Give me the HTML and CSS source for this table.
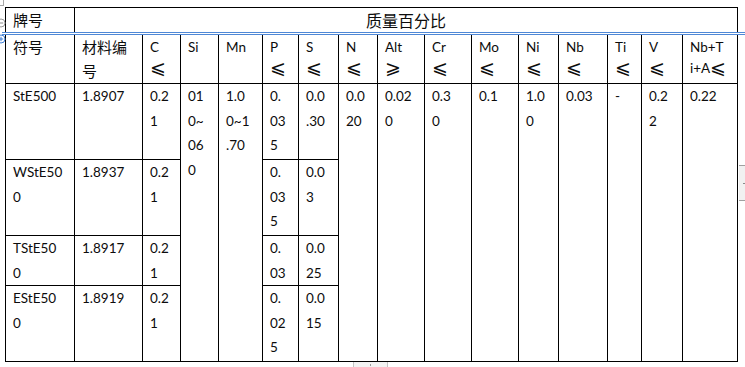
FILE: index.html
```
<!DOCTYPE html>
<html lang="zh">
<head>
<meta charset="utf-8">
<title>质量百分比</title>
<link rel="stylesheet" href="styles.css">
</head>
<body>
<div class="corner-mark"></div>
<div class="row-btn row-btn-del"><svg width="10" height="10" viewBox="0 0 10 10"><circle cx="5" cy="5" r="4" fill="#fff" stroke="#9a9a9a"/><path d="M2.8 5h4.4" stroke="#8a8a8a"/></svg></div>
<div class="row-btn row-btn-add"><svg width="10" height="10" viewBox="0 0 10 10"><circle cx="5" cy="5" r="4" fill="#fff" stroke="#3f7fd6"/><path d="M2.8 5h4.4M5 2.8v4.4" stroke="#3f7fd6"/></svg></div>
<div class="insert-line"></div>
<div class="side-handle"><span></span></div>
<div class="bottom-handle"><span></span></div>

<table class="grade">
<colgroup>
<col style="width:69px"><col style="width:68px"><col style="width:38px"><col style="width:38px">
<col style="width:44px"><col style="width:36px"><col style="width:40px"><col style="width:39px">
<col style="width:47px"><col style="width:47px"><col style="width:47px"><col style="width:40px">
<col style="width:49px"><col style="width:34px"><col style="width:41px"><col style="width:55px">
</colgroup>
<tr class="r-title">
<td class="zh">牌号</td>
<td class="zh center" colspan="15">质量百分比</td>
</tr>
<tr class="r-head">
<td class="zh">符号</td>
<td class="zh">材料编<br>号</td>
<td class="hd">C<br><span class="rel">⩽</span></td>
<td class="hd">Si</td>
<td class="hd">Mn</td>
<td class="hd">P<br><span class="rel">⩽</span></td>
<td class="hd">S<br><span class="rel">⩽</span></td>
<td class="hd">N<br><span class="rel">⩽</span></td>
<td class="hd">Alt<br><span class="rel">⩾</span></td>
<td class="hd">Cr<br><span class="rel">⩽</span></td>
<td class="hd">Mo<br><span class="rel">⩽</span></td>
<td class="hd">Ni<br><span class="rel">⩽</span></td>
<td class="hd">Nb<br><span class="rel">⩽</span></td>
<td class="hd">Ti<br><span class="rel">⩽</span></td>
<td class="hd">V<br><span class="rel">⩽</span></td>
<td class="hd">Nb+T<br>i+A<span class="rel">⩽</span></td>
</tr>
<tr class="r-3">
<td>StE500</td>
<td>1.8907</td>
<td>0.2<br>1</td>
<td rowspan="4">01<br>0~<br>06<br>0</td>
<td rowspan="4">1.0<br>0~1<br>.70</td>
<td>0.<br>03<br>5</td>
<td>0.0<br>.30</td>
<td rowspan="4">0.0<br>20</td>
<td rowspan="4">0.02<br>0</td>
<td rowspan="4">0.3<br>0</td>
<td rowspan="4">0.1</td>
<td rowspan="4">1.0<br>0</td>
<td rowspan="4">0.03</td>
<td rowspan="4">-</td>
<td rowspan="4">0.2<br>2</td>
<td rowspan="4">0.22</td>
</tr>
<tr class="r-3">
<td>WStE50<br>0</td>
<td>1.8937</td>
<td>0.2<br>1</td>
<td>0.<br>03<br>5</td>
<td>0.0<br>3</td>
</tr>
<tr class="r-2">
<td>TStE50<br>0</td>
<td>1.8917</td>
<td>0.2<br>1</td>
<td>0.<br>03</td>
<td>0.0<br>25</td>
</tr>
<tr class="r-3">
<td>EStE50<br>0</td>
<td>1.8919</td>
<td>0.2<br>1</td>
<td>0.<br>02<br>5</td>
<td>0.0<br>15</td>
</tr>
</table>
</body>
</html>
```
FILE: styles.css
```
html, body {
  background: #ffffff;
}
body {
  margin: 7px 0 0 5px;
  font-family: Lato, "Noto Sans CJK SC", "DejaVu Sans", sans-serif;
  font-size: 13.5px;
  color: #0c0c0c;
}
.grade {
  table-layout: fixed;
  border-collapse: separate;
  border-spacing: 0;
  width: 733px;
  border-top: 1px solid #000;
  border-left: 1px solid #000;
}
.grade td {
  border-right: 1px solid #000;
  border-bottom: 1px solid #000;
  padding: 0 0 0 7px;
  vertical-align: top;
  white-space: nowrap;
  line-height: 24.5px;
  overflow: hidden;
}
.grade .r-title { height: 27px; }
.grade .r-title td {
  border-bottom: 3px solid transparent;
  line-height: 24px;
  font-size: 15px;
}
.grade .r-title td.center {
  text-align: center;
  padding: 0;
  font-size: 16px;
}
.grade .r-head { height: 49px; }
.grade .r-head td.hd {
  line-height: 20px;
  padding-top: 2px;
}
.grade .r-head td.zh {
  line-height: 24px;
  font-size: 15px;
}
.grade .r-3 { height: 76px; }
.grade .r-2 { height: 50px; }
.zh {
  font-family: "Noto Sans CJK SC", sans-serif;
}
.rel {
  font-family: "DejaVu Sans", sans-serif;
  font-size: 19px;
  font-weight: 200;
  line-height: 20px;
  vertical-align: -1px;
}

/* editor overlays */
.insert-line {
  position: absolute;
  left: 2px;
  right: 0;
  top: 32px;
  height: 3px;
  box-sizing: border-box;
  border-top: 1px solid #4f88d6;
  border-bottom: 1px solid #4f88d6;
  background: #ffffff;
}
.row-btn {
  position: absolute;
  left: -4px;
  width: 10px;
  height: 10px;
}
.row-btn svg { display: block; }
.row-btn-del { top: 18px; }
.row-btn-add { top: 34px; }
.corner-mark {
  position: absolute;
  left: 0;
  top: 0;
  width: 3px;
  height: 5px;
  border-right: 1px solid #a8a8a8;
  border-bottom: 1px solid #a8a8a8;
}
.side-handle {
  position: absolute;
  left: 739px;
  top: 165px;
  width: 6px;
  height: 36px;
  box-sizing: border-box;
  background: #f1f1f1;
  border-top: 1px solid #a0a0a0;
  border-bottom: 1px solid #a0a0a0;
}
.side-handle span {
  position: absolute;
  left: 4px;
  top: 17px;
  width: 2px;
  height: 1px;
  background: #8a8a8a;
}
.bottom-handle {
  position: absolute;
  left: 353px;
  top: 362px;
  width: 35px;
  height: 6px;
  box-sizing: border-box;
  background: #f3f3f3;
  border-left: 1px solid #c4c4c4;
  border-right: 1px solid #c4c4c4;
}
.bottom-handle span {
  position: absolute;
  left: 16px;
  top: 2px;
  width: 1px;
  height: 2px;
  background: #9a9a9a;
}
```
